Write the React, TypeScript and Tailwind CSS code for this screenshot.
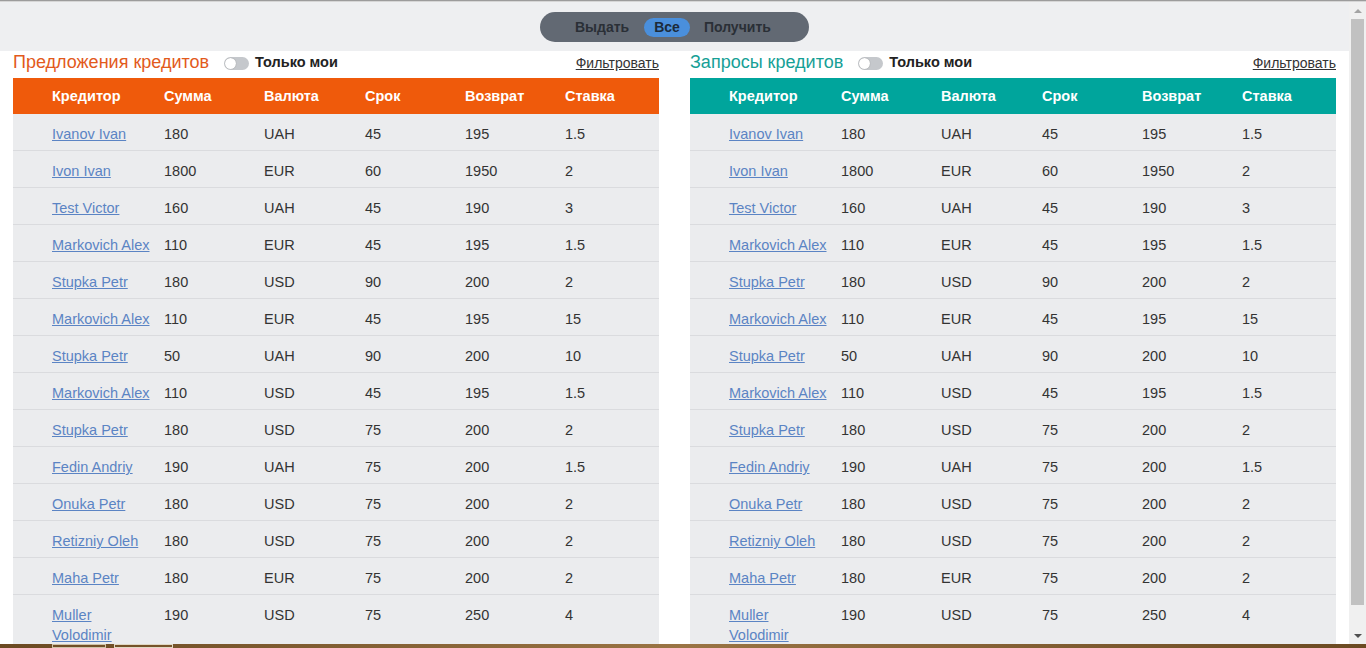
import React from "react";

type Row = [string, string, string, string, string, string];

const rows: Row[] = [
  ["Ivanov Ivan", "180", "UAH", "45", "195", "1.5"],
  ["Ivon Ivan", "1800", "EUR", "60", "1950", "2"],
  ["Test Victor", "160", "UAH", "45", "190", "3"],
  ["Markovich Alex", "110", "EUR", "45", "195", "1.5"],
  ["Stupka Petr", "180", "USD", "90", "200", "2"],
  ["Markovich Alex", "110", "EUR", "45", "195", "15"],
  ["Stupka Petr", "50", "UAH", "90", "200", "10"],
  ["Markovich Alex", "110", "USD", "45", "195", "1.5"],
  ["Stupka Petr", "180", "USD", "75", "200", "2"],
  ["Fedin Andriy", "190", "UAH", "75", "200", "1.5"],
  ["Onuka Petr", "180", "USD", "75", "200", "2"],
  ["Retizniy Oleh", "180", "USD", "75", "200", "2"],
  ["Maha Petr", "180", "EUR", "75", "200", "2"],
  ["Muller Volodimir", "190", "USD", "75", "250", "4"],
];

const headers = ["Кредитор", "Сумма", "Валюта", "Срок", "Возврат", "Ставка"];

function Toggle() {
  return (
    <div className="flex h-[13px] w-[25px] items-center rounded-full bg-[#c5c8cc] px-[1px]">
      <div className="h-[11px] w-[11px] rounded-full bg-white shadow-[0_0_1px_rgba(0,0,0,0.4)]" />
    </div>
  );
}

function Panel({ title, titleColor, headColor }: { title: string; titleColor: string; headColor: string }) {
  const grid = "grid grid-cols-[151px_100px_101px_100px_100px_1fr]";
  return (
    <div className="flex w-[646px] flex-col">
      <div className="flex h-[27px] items-center pb-[5px]">
        <span className={`text-[18px] leading-none ${titleColor}`}>{title}</span>
        <div className="ml-[15px] pt-[2px]">
          <Toggle />
        </div>
        <span className="ml-[6px] pt-[2px] text-[14.5px] font-bold text-[#222]">Только мои</span>
        <span className="ml-auto pt-[2px] text-[14px] text-[#333] underline">Фильтровать</span>
      </div>
      <div className={`${grid} h-[36px] items-center pt-[1px] ${headColor} text-[14.5px] font-bold text-white`}>
        {headers.map((h, i) => (
          <div key={i} className={i === 0 ? "pl-[39px]" : ""}>
            {h}
          </div>
        ))}
      </div>
      {rows.map((r, ri) => (
        <div key={ri} className={`${grid} border-b border-[#dadbde] bg-[#ebecee] pt-[10px] pb-[6px] text-[14.5px] leading-[20px] text-[#333]`}>
          <div className="pl-[39px] pr-[12px]">
            <span className="text-[#5b84c4] underline">{r[0]}</span>
          </div>
          {r.slice(1).map((c, ci) => (
            <div key={ci}>{c}</div>
          ))}
        </div>
      ))}
    </div>
  );
}

export default function App() {
  return (
    <div className="flex h-[648px] flex-col overflow-hidden bg-white" style={{ fontFamily: '"Liberation Sans", Arial, sans-serif' }}>
      <div className="h-[1px] bg-[#9c9c9c]" />
      <div className="h-[1px] bg-[#d6d6d6]" />
      <div className="flex min-h-0 flex-1">
        <div className="flex min-w-0 flex-1 flex-col overflow-hidden">
          <div className="flex h-[49px] shrink-0 justify-center bg-[#eeeff1] pt-[10px]">
            <div className="flex h-[30px] w-[269px] items-center rounded-full bg-[#626973] pl-[35px] text-[14px] font-bold text-[#2a2f36]">
              <span>Выдать</span>
              <span className="ml-[15px] flex h-[19px] items-center rounded-full bg-[#4a8fdc] px-[10px] text-[#1c2a3a]">Все</span>
              <span className="ml-[14px]">Получить</span>
            </div>
          </div>
          <div className="flex gap-[31px] px-[13px]">
            <Panel title="Предложения кредитов" titleColor="text-[#e25a1c]" headColor="bg-[#ef5a0b]" />
            <Panel title="Запросы кредитов" titleColor="text-[#16a096]" headColor="bg-[#00a59c]" />
          </div>
        </div>
        <div className="flex w-[17px] shrink-0 flex-col items-center bg-[#f0f0f0]">
          <div className="flex h-[17px] items-center justify-center">
            <div className="h-0 w-0 border-x-[4px] border-b-[4px] border-x-transparent border-b-[#a3a3a3]" />
          </div>
          <div className="h-[586px] w-[13px] bg-[#c1c1c1]" />
          <div className="flex-1" />
          <div className="flex h-[17px] items-center justify-center">
            <div className="h-0 w-0 border-x-[4px] border-t-[4px] border-x-transparent border-t-[#505050]" />
          </div>
        </div>
      </div>
      <div className="flex h-[4px] shrink-0 bg-gradient-to-r from-[#6b4a22] via-[#9a7444] to-[#6b4a22]">
        <div className="ml-[52px] w-[54px] border border-[#cfc3a8]" />
        <div className="ml-[8px] w-[59px] border border-[#e0d8c4]" />
      </div>
    </div>
  );
}
